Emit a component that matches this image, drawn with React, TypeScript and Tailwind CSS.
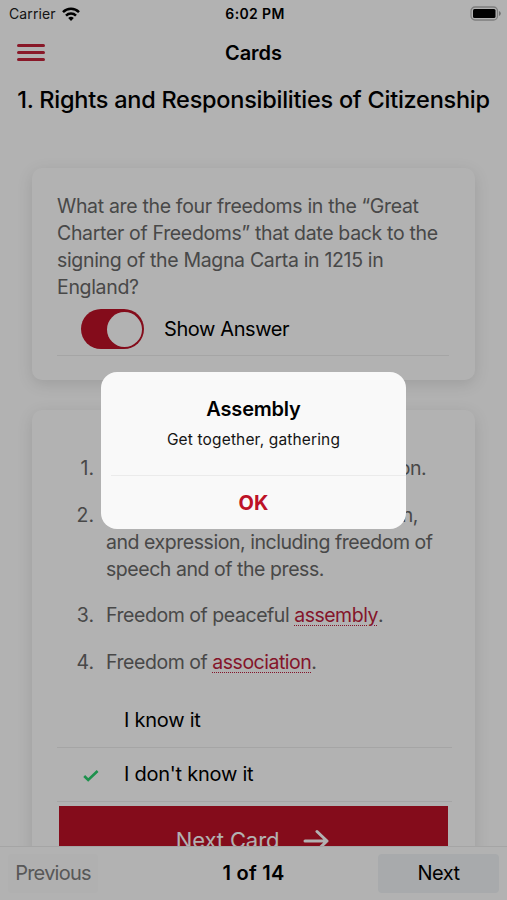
import React, { useState } from "react";

const StatusBar = () => (
  <div className="flex h-7 items-center justify-between pl-[9px] pr-[6px] pb-px text-[14px]">
    <div className="flex w-40 items-center gap-[6px] text-[#202020]">
      <span className="tracking-[0.1px]">Carrier</span>
      <svg width="18" height="14" viewBox="0 0 18 14" fill="none" stroke="#000" strokeWidth="2.5">
        <path d="M1 5.1a11.3 11.3 0 0 1 16 0" />
        <path d="M4 8.6a7.1 7.1 0 0 1 10 0" />
        <path d="M9 13.9 6.2 11a4 4 0 0 1 5.6 0z" fill="#000" stroke="none" />
      </svg>
    </div>
    <span className="font-semibold tracking-[0.35px]">6:02 PM</span>
    <div className="flex w-40 justify-end">
      <svg width="31" height="15" viewBox="0 0 31 15">
        <rect x="1" y="1" width="26.5" height="13" rx="4" fill="none" stroke="#b4b4b4" strokeWidth="1.3" />
        <rect x="3" y="3" width="22.5" height="9" rx="1.5" fill="#000" />
        <path d="M29 5v5q1.8-.7 1.8-2.5T29 5z" fill="#a0a0a0" />
      </svg>
    </div>
  </div>
);

const Header = () => (
  <header className="grid h-[48px] grid-cols-3 items-center px-[17px] pt-px">
    <button className="flex w-[28px] flex-col gap-[4.7px]">
      <span className="h-[2.5px] rounded-full bg-[#c4233a]" />
      <span className="h-[2.5px] rounded-full bg-[#c4233a]" />
      <span className="h-[2.5px] rounded-full bg-[#c4233a]" />
    </button>
    <h2 className="text-center text-[20px] font-semibold">Cards</h2>
  </header>
);

const Card = ({ children, className }: { children: React.ReactNode; className: string }) => (
  <section
    className={`ml-8 w-[443px] rounded-[10px] bg-white px-[25px] shadow-[0_4px_16px_rgba(0,0,0,0.12)] ${className}`}
  >
    {children}
  </section>
);

const Term = ({ children }: { children: React.ReactNode }) => (
  <a className="tracking-[-0.5px] text-[#be1e3d] underline decoration-dotted decoration-1 underline-offset-[3px]">
    {children}
  </a>
);

const answers = [
  <>Freedom of conscience and religion.</>,
  <>
    Freedom of thought, belief, opinion,
    <br />
    and expression, including freedom of
    <br />
    speech and of the press.
  </>,
  <>
    Freedom of peaceful <Term>assembly</Term>.
  </>,
  <>
    Freedom of <Term>association</Term>.
  </>,
];

const App = () => {
  const [known, setKnown] = useState(false);

  return (
    <div className="relative flex h-[900px] w-[507px] flex-col overflow-hidden bg-white font-['Inter','Liberation_Sans',sans-serif] text-black">
      <StatusBar />
      <Header />
      <main className="min-h-0 flex-1 overflow-hidden">
        <h1 className="mt-[5px] h-[36px] pt-px text-center text-[23.5px] font-medium leading-[36px] tracking-[-0.25px] whitespace-nowrap">
          1. Rights and Responsibilities of Citizenship
        </h1>

        <Card className="mt-[51px] h-[212px] pt-[25px]">
          <p className="text-[19.5px] leading-[27px] tracking-[-0.33px] whitespace-nowrap text-[#686868]">
            What are the four freedoms in the “Great
            <br />
            Charter of Freedoms” that date back to the
            <br />
            signing of the Magna Carta in 1215 in
            <br />
            England?
          </p>
          <div className="flex h-[55px] w-[392px] items-center border-b border-[#ececec] pl-[24px]">
            <span className="mt-[2px] flex h-[40px] w-[63px] items-center justify-end rounded-full bg-[#bd1227] pr-[2px]">
              <span className="size-[35px] rounded-full bg-white" />
            </span>
            <span className="mt-px ml-5 text-[20px] tracking-[-0.4px]">Show Answer</span>
          </div>
        </Card>

        <Card className="mt-[30px] h-[500px] pt-[45px]">
          <ol className="flex flex-col gap-[19.5px] text-[19.5px] leading-[27px] tracking-[-0.45px] whitespace-nowrap text-[#686868]">
            {answers.map((answer, idx) => (
              <li key={idx} className="flex">
                <span className="mr-[12px] w-[37px] text-right tracking-normal">{idx + 1}.</span>
                <div>{answer}</div>
              </li>
            ))}
          </ol>
          <div className="mt-[17px] w-[395px] text-[20px] tracking-[-0.25px]">
            <div
              className="flex h-[55px] items-center border-b border-[#ececec] pl-[67px]"
              onClick={() => setKnown(true)}
            >
              I know it
            </div>
            <div
              className="flex h-[54px] items-center border-b border-[#ececec] pl-[26px]"
              onClick={() => setKnown(false)}
            >
              {!known && (
                <svg className="mt-px" width="16" height="14" viewBox="0 0 16 14" fill="none" stroke="#2ad06e" strokeWidth="2.6">
                  <path d="M1.2 8l4 4L14.6 3" />
                </svg>
              )}
              <span className={known ? "ml-[41px]" : "ml-[25px]"}>I don't know it</span>
            </div>
          </div>
          <button className="mt-[4px] ml-[2px] flex h-[70px] w-[389px] items-center justify-center gap-[24px] bg-[#bd1227] pr-[2px] text-[22px] text-white">
            <span className="tracking-[-0.1px]">Next Card</span>
            <svg width="26" height="24" viewBox="0 0 26 24" fill="none" stroke="#fff" strokeWidth="3" strokeLinecap="round" strokeLinejoin="round">
              <path d="M2 12h22M14 2.5 24 12l-10 9.5" />
            </svg>
          </button>
        </Card>
      </main>

      <footer className="relative flex h-[54px] items-center justify-between border-t border-[#ececec] bg-white px-2 text-[20px]">
        <button className="h-[39px] w-[121px] text-left tracking-[-0.75px]">
          <span className="inline-flex h-full w-[90px] items-center justify-center rounded bg-[#fcfcfc] pb-px text-[#7e7e7e]">
            Previous
          </span>
        </button>
        <span className="pb-px font-semibold tracking-[0.25px]">1 of 14</span>
        <button className="h-[39px] w-[121px] rounded bg-[#f1f4f7] pb-px tracking-[-0.5px]">Next</button>
      </footer>

      {/* Backdrop and alert */}
      <div className="absolute inset-0 flex items-start justify-center bg-black/30 pt-[372px]">
        <div role="alertdialog" className="h-[157px] w-[305px] rounded-[16px] bg-[#f9f9f9] text-center">
          <h3 className="pt-[23px] text-[20px] font-semibold leading-[28px] tracking-[-0.2px]">Assembly</h3>
          <p className="mt-[6px] text-[15.5px] leading-[22px] tracking-[0.15px] text-[#141414]">Get together, gathering</p>
          <div className="mt-[24px] ml-[10px] border-t border-[#ebebeb]" />
          <button className="h-[53px] w-full text-[20px] font-bold text-[#bd1227]">OK</button>
        </div>
      </div>
    </div>
  );
};

export default App;
